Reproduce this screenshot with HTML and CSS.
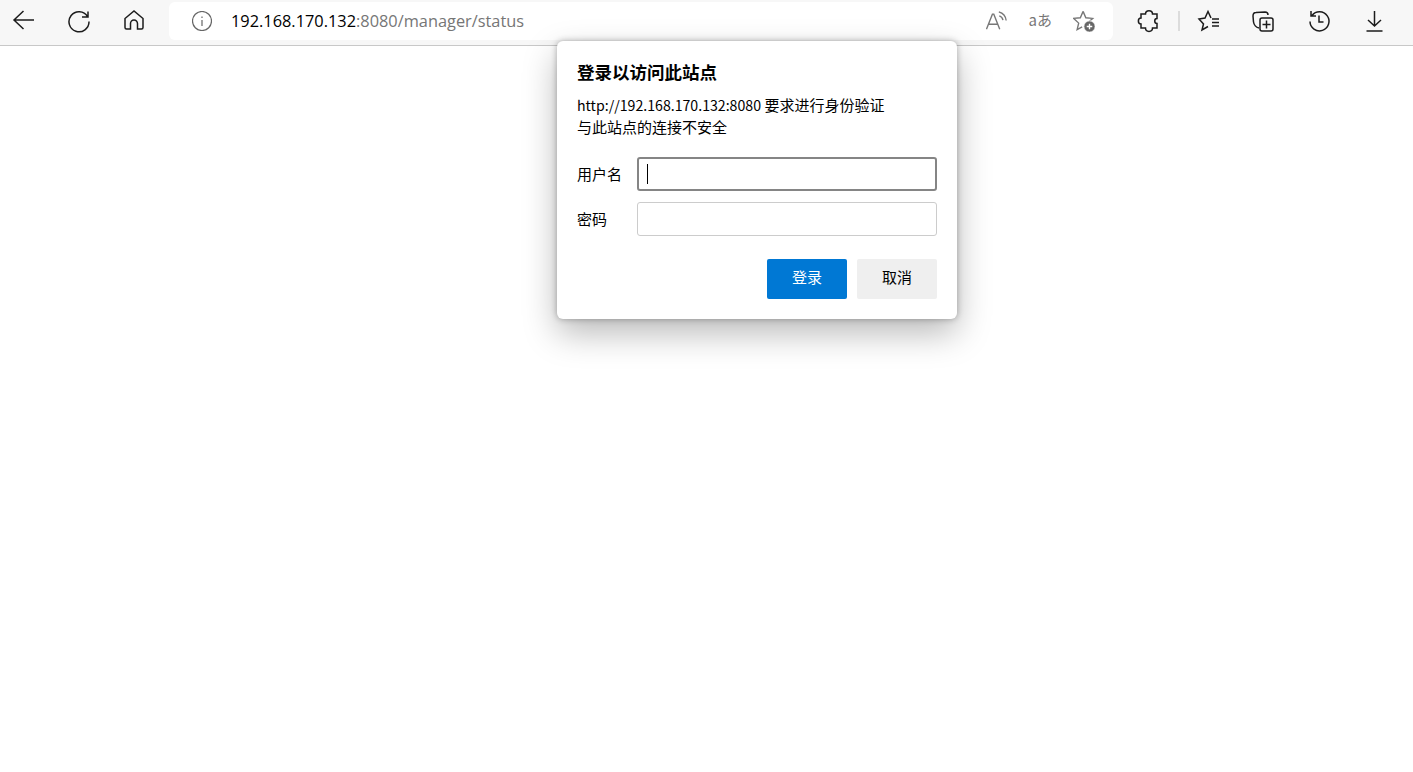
FILE: index.html
```html
<!DOCTYPE html>
<html lang="zh-CN">

<head>
    <meta charset="UTF-8">
    <title>192.168.170.132:8080/manager/status</title>
    <link rel="stylesheet" href="styles.css">
</head>

<body>
    <div class="toolbar">
        <div class="nav-buttons">
            <svg class="icon" viewBox="0 0 24 24"><path d="M2 11H22M11.500 2 2 11 11.500 20"/></svg>
            <svg class="icon" viewBox="0 0 24 24"><path d="M20.500 7.500A10 10 0 1 0 22 12.500M21 2.500V8H15"/></svg>
            <svg class="icon" viewBox="0 0 24 24"><path d="M3 18.500V9.500L12 2 21 9.500V18.500A1.500 1.500 0 0 1 19.500 20H15.500V14.500A3.500 3.500 0 0 0 8.500 14.500V20H4.500A1.500 1.500 0 0 1 3 18.500Z"/></svg>
        </div>
        <div class="address-bar">
            <svg class="icon-info" viewBox="0 0 20 20"><circle cx="10" cy="10" r="9.500"/><path d="M10 9V15M10 5.500V7"/></svg>
            <span class="url-host">192.168.170.132</span><span class="url-rest">:8080/manager/status</span>
            <div class="address-actions">
                <svg class="icon-grey" viewBox="0 0 24 24"><path d="M.5 21 7 4.500H8.500L15 21M3 15.500H12.500M14.500 6.500A6 6 0 0 1 18.500 11M14 2A11 11 0 0 1 22 11.500"/></svg>
                <span class="translate">aあ</span>
                <svg class="icon-grey" viewBox="0 0 24 24"><path d="M11 1.500 14 8.500 21.500 9.200 16 14M11 1.500 8 8.500 .8 9.200 6.200 14.300 4.500 21.500 10 18.500"/><circle class="badge" cx="18" cy="18" r="6.200"/><path class="badge-plus" d="M18 15V21M15 18H21"/></svg>
            </div>
        </div>
        <div class="browser-buttons">
            <svg class="icon" viewBox="0 0 24 24"><path d="M8.500 5C8.500 .5 15.500 .5 15.500 5H20V9.500C17 9.500 17 14.500 20 14.500V19H15.500C15.500 23.500 8.500 23.500 8.500 19H4V15C.5 15 .5 9 4 9V5Z"/></svg>
            <span class="divider"></span>
            <svg class="icon" viewBox="0 0 24 24"><path d="M14 9 11 2.500 8 9 2 10 6.500 15 5 21 11 17.500M15 10H22M15 13.500H22M15 17H22"/></svg>
            <svg class="icon" viewBox="0 0 24 24"><path d="M7 19C3 18 2 16 1.500 13L1 7C1 5 2 3.500 4 3.500L13 3C15 3 16 4 16 6"/><rect x="8" y="9" width="13" height="13" rx="2"/><path d="M14.500 11.500V19.500M10.500 15.500H18.500"/></svg>
            <svg class="icon" viewBox="0 0 24 24"><path d="M5 6.500A9.500 9.500 0 1 1 3 12.500M4 2V7H9M12 6.500V13H16.500"/></svg>
            <svg class="icon" viewBox="0 0 24 24"><path d="M12.500 2V17M6 11 12.500 17 19 11M4.500 22H20.500"/></svg>
        </div>
    </div>

    <div class="auth-dialog">
        <h1 class="auth-title">登录以访问此站点</h1>
        <p class="auth-text"><span class="auth-url">http://192.168.170.132:8080</span> 要求进行身份验证<br>与此站点的连接不安全</p>
        <div class="auth-row">
            <label class="auth-label">用户名</label>
            <div class="auth-input auth-input-focus"><span class="caret"></span></div>
        </div>
        <div class="auth-row">
            <label class="auth-label">密码</label>
            <div class="auth-input"></div>
        </div>
        <div class="auth-buttons">
            <button class="btn btn-primary">登录</button>
            <button class="btn btn-cancel">取消</button>
        </div>
    </div>
</body>

</html>
```
FILE: styles.css
```css
html,
body {
    margin: 0;
    height: 100%;
    background-color: #fff;
    overflow: hidden;
}

body {
    font-family: "Noto Sans CJK SC", "Noto Sans", sans-serif;
    color: #000;
}

.toolbar {
    display: flex;
    align-items: center;
    height: 42px;
    padding-bottom: 3px;
    background-color: #f7f7f7;
    border-bottom: 1px solid #c8c8c8;
}

svg {
    fill: none;
    stroke-width: 1.500;
    flex: none;
}

.icon {
    width: 24px;
    height: 24px;
    stroke: #1c1c1c;
}

.icon-grey {
    width: 22px;
    height: 22px;
    stroke: #777;
}

.translate {
    margin-bottom: 2px;
    font-family: "Noto Sans CJK JP", sans-serif;
    font-size: 15px;
    line-height: 20px;
    color: #777;
}

.badge {
    fill: #666;
    stroke: #fff;
    stroke-width: 1;
}

.badge-plus {
    stroke: #fff;
    stroke-width: 1.500;
}

.nav-buttons {
    display: flex;
    align-items: center;
    gap: 31px;
    padding-left: 12px;
    width: 169px;
    box-sizing: border-box;
}

.address-bar {
    display: flex;
    align-items: center;
    width: 944px;
    height: 38px;
    background-color: #fff;
    border-radius: 6px;
    font-family: "Open Sans", "Noto Sans", sans-serif;
    font-size: 16.350px;
}

.icon-info {
    width: 20px;
    height: 20px;
    margin: 0 19px 0 23px;
    stroke: #666;
    stroke-width: 1.200;
}

.url-host {
    color: #000;
}

.url-rest {
    color: #767676;
}

.address-actions {
    display: flex;
    align-items: center;
    gap: 21px;
    margin-left: auto;
    padding-right: 18px;
}

.browser-buttons {
    display: flex;
    align-items: center;
    gap: 31px;
    padding-left: 24px;
}

.divider {
    width: 2px;
    height: 20px;
    margin: 0 -14px;
    background-color: #dcdcdc;
}

.auth-dialog {
    position: absolute;
    top: 41px;
    left: 557px;
    width: 400px;
    height: 278px;
    box-sizing: border-box;
    padding: 19px 20px 20px;
    background-color: #fff;
    border-radius: 6px;
    box-shadow: 0 0 6px rgba(0, 0, 0, 0.3), 0 14px 34px rgba(0, 0, 0, 0.28);
}

.auth-title {
    margin: 0;
    font-size: 17.500px;
    line-height: 24px;
    font-weight: 700;
}

.auth-text {
    margin: 10px 0 19px;
    font-size: 15px;
    line-height: 22px;
}

.auth-url {
    font-size: 14.150px;
    line-height: 1;
}

.auth-row {
    display: flex;
    align-items: center;
    margin-bottom: 11px;
}

.auth-label {
    width: 60px;
    padding-bottom: 1px;
    font-size: 15px;
}

.auth-input {
    display: flex;
    align-items: center;
    width: 300px;
    height: 34px;
    box-sizing: border-box;
    background-color: #fff;
    border: 1px solid #ccc;
    border-radius: 3px;
    padding-left: 9px;
}

.auth-input-focus {
    border: 2px solid #858585;
    padding-left: 8px;
}

.caret {
    width: 1px;
    height: 20px;
    background-color: #000;
}

.auth-buttons {
    display: flex;
    justify-content: flex-end;
    gap: 10px;
    margin-top: 23px;
}

.btn {
    width: 80px;
    height: 40px;
    padding: 0 0 5px;
    border: none;
    border-radius: 2px;
    font-family: inherit;
    font-size: 15px;
}

.btn-primary {
    background-color: #0078d4;
    color: #fff;
}

.btn-cancel {
    background-color: #efefef;
    color: #000;
}
```
